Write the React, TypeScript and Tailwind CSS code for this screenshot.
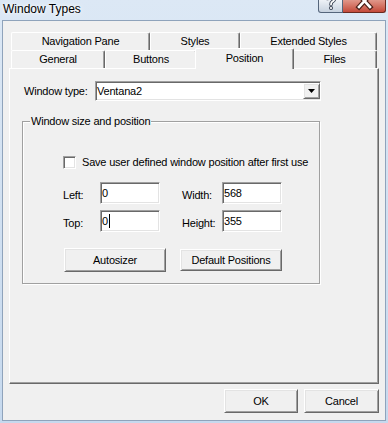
import React from "react";

const raised =
  "border border-t-white border-l-white border-r-[#696969] border-b-[#696969] shadow-[inset_1px_1px_0_#e3e3e3,inset_-1px_-1px_0_#a0a0a0]";
const sunken =
  "border border-t-[#a0a0a0] border-l-[#a0a0a0] border-r-white border-b-white shadow-[inset_1px_1px_0_#696969,inset_-1px_-1px_0_#e3e3e3]";

function Tab({ label, w, selected }: { label: string; w: string; selected?: boolean }) {
  if (selected) {
    return (
      <div
        className={`${w} h-[21px] -mt-[2px] -mx-[2px] relative z-10 bg-[#f0f0f0] flex items-center justify-center border-t border-l border-r border-t-white border-l-white border-r-[#696969] shadow-[inset_-1px_0_0_#a0a0a0] rounded-t-[2px] pb-[2px]`}
      >
        {label}
      </div>
    );
  }
  return (
    <div
      className={`${w} h-[18px] flex items-center justify-center border-t border-l border-r border-t-white border-l-white border-r-[#696969] shadow-[inset_-1px_0_0_#a0a0a0] rounded-t-[2px] bg-[#f0f0f0]`}
    >
      {label}
    </div>
  );
}

function Field({ value, caret }: { value: string; caret?: boolean }) {
  return (
    <div className={`w-[60px] h-[22px] bg-white ${sunken} flex items-center pl-[1px]`}>
      <span>{value}</span>
      {caret && <span className="inline-block w-[1px] h-[14px] bg-black ml-[1px]" />}
    </div>
  );
}

export default function App() {
  return (
    <div className="w-[388px] h-[423px] flex flex-col bg-gradient-to-b from-[#dce8f5] to-[#c6d9ee] font-['Liberation_Sans',Arial,sans-serif] text-[11px] leading-[13px] tracking-[-0.2px] text-black overflow-hidden">
      {/* Title bar */}
      <div className="h-[20px] shrink-0 flex items-start justify-between">
        <div className="pl-[3px] pt-[2px] text-[12px] leading-[15px] tracking-normal [text-shadow:0_0_6px_#fff,0_0_3px_#fff]">
          Window Types
        </div>
        <div className="flex pr-[2px]">
          <div className="w-[25px] h-[13px] overflow-hidden border border-t-0 border-[#55667c] rounded-bl-[3px] bg-gradient-to-b from-[#eef2f7] to-[#c7d2df]">
            <svg width="23" height="12" viewBox="0 0 23 12">
              <path
                d="M8.5 -1.5 Q8.5 -4.5 12 -4.5 Q15.5 -4.5 15.5 -1.5 Q15.5 0.5 13.2 1.8 Q12 2.6 12 4.5"
                fill="none"
                stroke="#3a4454"
                strokeWidth="3.6"
                strokeLinecap="round"
              />
              <circle cx="12" cy="8" r="2" fill="#3a4454" />
              <path
                d="M8.5 -1.5 Q8.5 -4.5 12 -4.5 Q15.5 -4.5 15.5 -1.5 Q15.5 0.5 13.2 1.8 Q12 2.6 12 4.5"
                fill="none"
                stroke="#fff"
                strokeWidth="1.8"
                strokeLinecap="round"
              />
              <circle cx="12" cy="8" r="1.1" fill="#fff" />
            </svg>
          </div>
          <div className="w-[43px] h-[13px] overflow-hidden border border-t-0 border-l-0 border-[#6a2a20] rounded-br-[3px] bg-gradient-to-b from-[#e0978a] to-[#c4493a]">
            <svg width="42" height="12" viewBox="0 0 42 12">
              <path d="M16 -5 L27 7 M27 -5 L16 7" stroke="#4a2018" strokeWidth="5" strokeLinecap="square" />
              <path d="M16 -5 L27 7 M27 -5 L16 7" stroke="#fff" strokeWidth="2.6" strokeLinecap="square" />
            </svg>
          </div>
        </div>
      </div>

      {/* Client area */}
      <div className="flex-1 mx-[2px] mb-[2px] border border-[#8fa3bb] bg-[#f0f0f0] flex flex-col">
        {/* Tab control */}
        <div className="mt-[11px] ml-[6px] w-[370px] flex flex-col">
          <div className="flex h-[18px] px-[2px]">
            <Tab label="Navigation Pane" w="w-[139px]" />
            <Tab label="Styles" w="w-[90px]" />
            <Tab label="Extended Styles" w="w-[137px]" />
          </div>
          <div className="flex h-[18px] px-[2px] items-start">
            <Tab label="General" w="w-[94px]" />
            <Tab label="Buttons" w="w-[92px]" />
            <Tab label="Position" w="w-[99px]" selected />
            <Tab label="Files" w="w-[85px]" />
          </div>
          {/* Panel */}
          <div className="h-[316px] border border-t-white border-l-white border-r-[#696969] border-b-[#696969] shadow-[inset_-1px_-1px_0_#a0a0a0] flex flex-col">
            <div className="mt-[12px] ml-[14px] flex items-center h-[20px]">
              <div className="w-[71px]">Window type:</div>
              <div className={`w-[226px] h-[20px] bg-white ${sunken} flex items-center justify-between`}>
                <span className="pl-[1px]">Ventana2</span>
                <div className={`w-[17px] h-[16px] bg-[#f0f0f0] ${raised} flex items-center justify-center`}>
                  <svg width="7" height="4" viewBox="0 0 7 4">
                    <polygon points="0,0 7,0 3.5,4" fill="#000" />
                  </svg>
                </div>
              </div>
            </div>

            {/* Group box */}
            <div className="mt-[20px] ml-[12px] w-[298px] h-[163px] border border-[#a0a0a0] shadow-[inset_1px_1px_0_#fff,1px_1px_0_#fff] flex flex-col">
              <div className="-mt-[7px] ml-[7px] w-fit px-[1px] bg-[#f0f0f0]">Window size and position</div>

              <div className="mt-[28px] ml-[40px] flex items-center h-[13px]">
                <div className={`w-[13px] h-[13px] bg-white ${sunken}`} />
                <span className="ml-[6px]">Save user defined window position after first use</span>
              </div>

              <div className="mt-[13px] ml-[40px] flex items-center h-[22px]">
                <div className="w-[37px] mt-[5px]">Left:</div>
                <Field value="0" />
                <div className="ml-[22px] w-[40px] mt-[5px]">Width:</div>
                <Field value="568" />
              </div>
              <div className="mt-[6px] ml-[40px] flex items-center h-[22px]">
                <div className="w-[37px] mt-[5px]">Top:</div>
                <Field value="0" caret />
                <div className="ml-[22px] w-[40px] mt-[5px]">Height:</div>
                <Field value="355" />
              </div>

              <div className="mt-[16px] ml-[41px] flex items-center h-[24px]">
                <div className={`w-[102px] h-[24px] bg-[#f0f0f0] ${raised} flex items-center justify-center`}>
                  Autosizer
                </div>
                <div className={`ml-[14px] w-[102px] h-[22px] bg-[#f0f0f0] ${raised} flex items-center justify-center`}>
                  Default Positions
                </div>
              </div>
            </div>
          </div>
        </div>

        {/* Dialog buttons */}
        <div className="mt-[5px] flex justify-end gap-[6px] pr-[6px]">
          <div className={`w-[74px] h-[24px] bg-[#f0f0f0] ${raised} flex items-center justify-center`}>OK</div>
          <div className={`w-[75px] h-[24px] bg-[#f0f0f0] ${raised} flex items-center justify-center`}>Cancel</div>
        </div>
      </div>
    </div>
  );
}
